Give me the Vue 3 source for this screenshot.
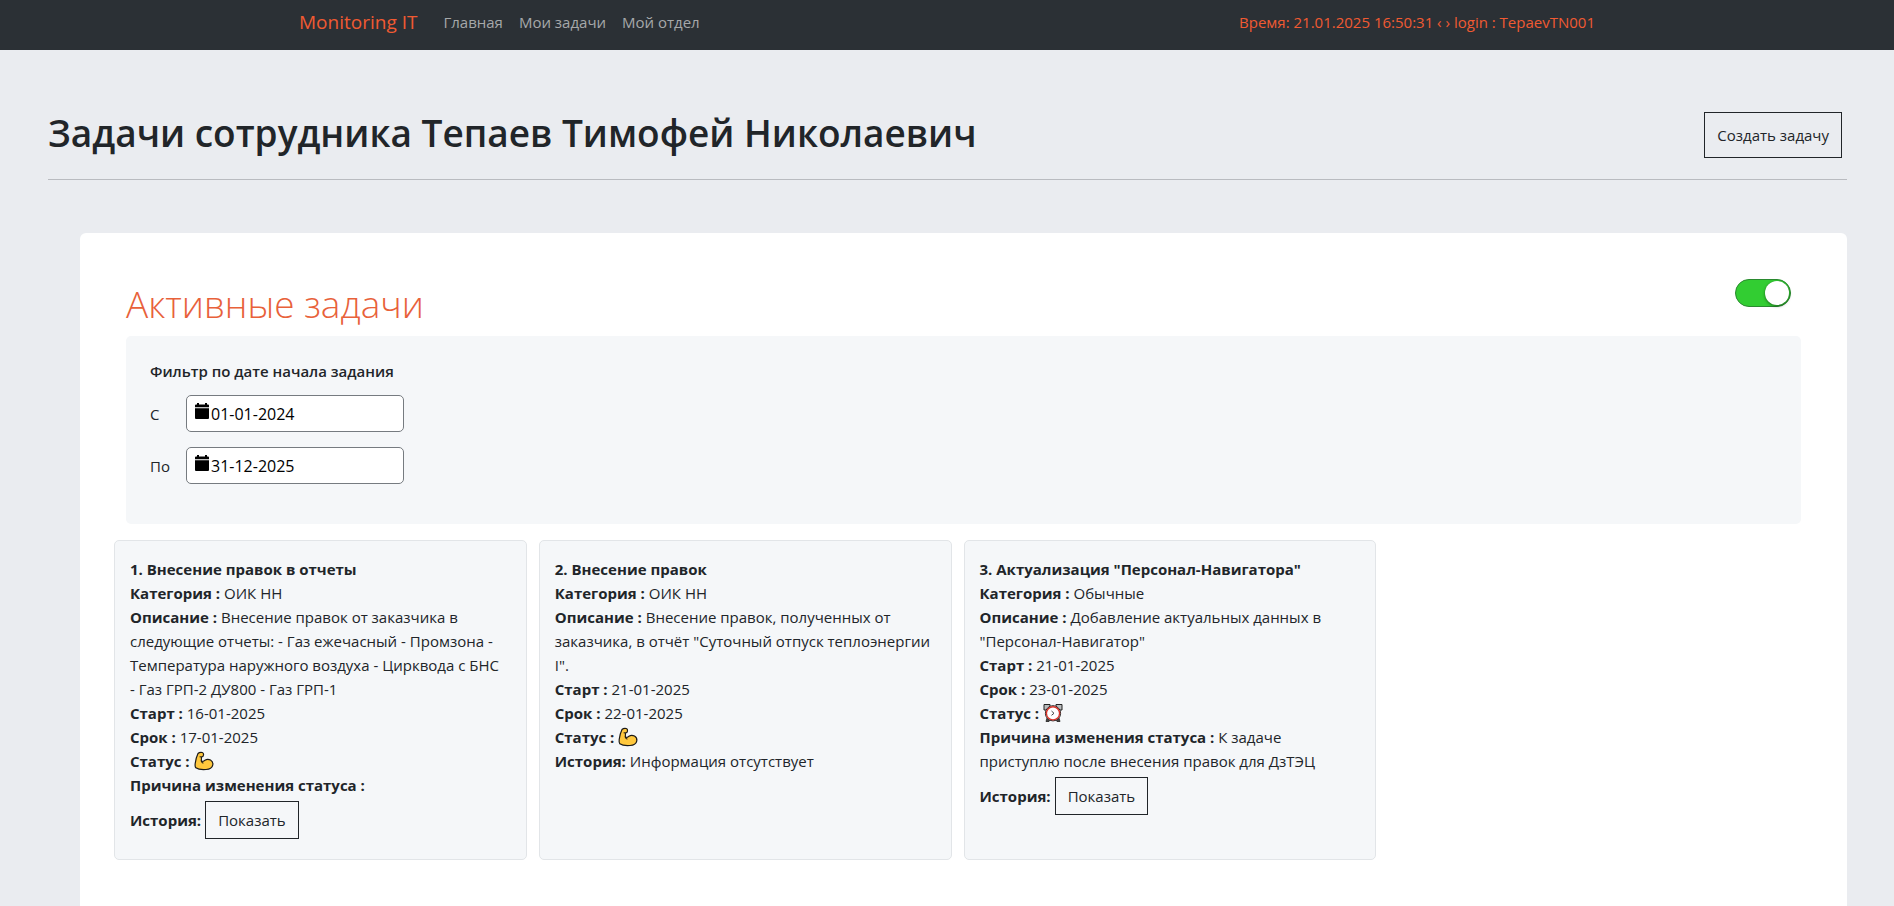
<script setup>
import { ref } from 'vue'

const activeOnly = ref(true)
const from = ref('01-01-2024')
const to = ref('31-12-2025')

const tasks = [
  {
    title: '1. Внесение правок в отчеты',
    category: 'ОИК НН',
    text: 'Внесение правок от заказчика в следующие отчеты: - Газ ежечасный - Промзона - Температура наружного воздуха - Цирквода с БНС - Газ ГРП-2 ДУ800 - Газ ГРП-1',
    start: '16-01-2025',
    due: '17-01-2025',
    status: 'arm',
    reason: '',
    history: true,
  },
  {
    title: '2. Внесение правок',
    category: 'ОИК НН',
    text: 'Внесение правок, полученных от заказчика, в отчёт "Суточный отпуск теплоэнергии I".',
    start: '21-01-2025',
    due: '22-01-2025',
    status: 'arm',
    reason: null,
    history: false,
  },
  {
    title: '3. Актуализация "Персонал-Навигатора"',
    category: 'Обычные',
    text: 'Добавление актуальных данных в "Персонал-Навигатор"',
    start: '21-01-2025',
    due: '23-01-2025',
    status: 'clock',
    reason: 'К задаче приступлю после внесения правок для ДзТЭЦ',
    history: true,
  },
]
</script>

<template>
  <div class="page">
    <header class="navbar">
      <div class="container">
        <a class="brand" href="#">Monitoring IT</a>
        <nav class="links">
          <a href="#">Главная</a>
          <a href="#">Мои задачи</a>
          <a href="#">Мой отдел</a>
        </nav>
        <span class="session">Время: 21.01.2025 16:50:31 ‹ › login : TepaevTN001</span>
      </div>
    </header>

    <main class="main">
      <div class="heading">
        <h1>Задачи сотрудника Тепаев Тимофей Николаевич</h1>
        <button class="btn" type="button">Создать задачу</button>
      </div>

      <section class="panel">
        <div class="panel-head">
          <h2>Активные задачи</h2>
          <input v-model="activeOnly" class="switch" type="checkbox" aria-label="Активные задачи" />
        </div>

        <form class="filter" @submit.prevent>
          <h3>Фильтр по дате начала задания</h3>
          <div class="field">
            <label for="from">С</label>
            <div class="date">
              <svg viewBox="0 0 14 16" aria-hidden="true">
                <path d="M2 0h2v1.500h6V0h2v1.500h1a1 1 0 0 1 1 1V4.300H0V2.500a1 1 0 0 1 1-1h1zM0 5.200h14V15a1 1 0 0 1-1 1H1a1 1 0 0 1-1-1z" />
              </svg>
              <input id="from" v-model="from" type="text" />
            </div>
          </div>
          <div class="field">
            <label for="to">По</label>
            <div class="date">
              <svg viewBox="0 0 14 16" aria-hidden="true">
                <path d="M2 0h2v1.500h6V0h2v1.500h1a1 1 0 0 1 1 1V4.300H0V2.500a1 1 0 0 1 1-1h1zM0 5.200h14V15a1 1 0 0 1-1 1H1a1 1 0 0 1-1-1z" />
              </svg>
              <input id="to" v-model="to" type="text" />
            </div>
          </div>
        </form>

        <div class="cards">
          <article v-for="task in tasks" :key="task.title" class="card">
            <div><b>{{ task.title }}</b></div>
            <div><b>Категория :</b> {{ task.category }}</div>
            <div><b>Описание :</b> {{ task.text }}</div>
            <div><b>Старт :</b> {{ task.start }}</div>
            <div><b>Срок :</b> {{ task.due }}</div>
            <div class="status">
              <b>Статус :</b>
              <svg v-if="task.status === 'arm'" viewBox="0 0 20 20" role="img" aria-label="В работе">
                <path d="M4 2.500Q5.500 1 8.300 1.500Q9.800 2 9.500 4Q9.300 6 7.500 6L7.300 10Q9.500 11 11 9.200Q13.500 7.500 16.500 9Q19.300 10.700 18.800 13.800Q18 18 12 18.500Q5 19 1.800 16.800Q.800 15.800 1.200 12.500Q2 6.500 4 2.500Z" fill="#ffc83d" stroke="#1c1a17" stroke-width="1.200" stroke-linejoin="round" />
                <path d="M6 5.800L7.500 6M7.300 10Q7.500 11.500 9 12" fill="none" stroke="#1c1a17" stroke-width="1.100" stroke-linecap="round" />
              </svg>
              <svg v-else viewBox="0 0 20 20" role="img" aria-label="Отложено">
                <path d="M4 15L3 18.500H6L7 17ZM16 15L17 18.500H14L13 17Z" fill="#444" stroke="#222" stroke-width=".8" />
                <path d="M1 7V1.500H7V3.500L3 7ZM19 7V1.500H13V3.500L17 7Z" fill="#b9bcbe" stroke="#222" stroke-width="1" stroke-linejoin="round" />
                <circle cx="10" cy="10.300" r="7.600" fill="#fff" stroke="#222" stroke-width="1" />
                <circle cx="10" cy="10.300" r="6.600" fill="#fff" stroke="#d9342b" stroke-width="1.400" />
                <path d="M8.500 8L11 10.300L8.500 12.300" fill="none" stroke="#444" stroke-width="1" />
              </svg>
            </div>
            <div v-if="task.reason !== null"><b>Причина изменения статуса :</b> {{ task.reason }}</div>
            <div v-if="task.history" class="history">
              <b>История:</b>
              <button class="btn" type="button">Показать</button>
            </div>
            <div v-else><b>История:</b> Информация отсутствует</div>
          </article>
        </div>
      </section>
    </main>
  </div>
</template>

<style>
body {
  margin: 0;
  background: #eaecf0;
}
</style>

<style scoped>
.page {
  display: flex;
  flex-direction: column;
  min-height: 100vh;
  color: #212529;
  font-family: "Open Sans", "Noto Sans", sans-serif;
  font-size: 15px;
  line-height: 24px;
}
h1, h2, h3 {
  margin: 0;
}
.navbar {
  background: #2b3035;
  color: #f05a32;
}
.container {
  display: flex;
  align-items: center;
  box-sizing: border-box;
  max-width: 1320px;
  height: 50px;
  margin: 0 auto;
  padding: 0 12px 6px;
}
.brand {
  margin-right: 26px;
  color: inherit;
  font-size: 19px;
  text-decoration: none;
}
.links {
  display: flex;
  gap: 16px;
}
.links a {
  color: #a6a8aa;
  text-decoration: none;
}
.session {
  margin-left: auto;
}
.main {
  display: flex;
  flex-direction: column;
  flex: 1;
  padding: 62px 47px 0 48px;
}
.heading {
  display: flex;
  justify-content: space-between;
  align-items: flex-start;
  padding: 0 5px 21px 0;
  border-bottom: 1px solid #b9bbc0;
}
.heading h1 {
  font-size: 37px;
  font-weight: 600;
  line-height: 42px;
}
.btn {
  padding: 6px 12px;
  border: 1px solid #212529;
  background: transparent;
  color: inherit;
  font: inherit;
}
.heading .btn {
  padding: 10px 12px;
}
.panel {
  flex: 1;
  margin: 53px 0 0 32px;
  padding: 46px 46px 46px 34px;
  border-radius: 6px 6px 0 0;
  background: #fff;
}
.panel-head {
  display: flex;
  justify-content: space-between;
  align-items: flex-start;
  margin-left: 12px;
  padding: 0 10px 7px 0;
}
.panel-head h2 {
  color: #e8613a;
  font-size: 37px;
  font-weight: 300;
  line-height: 50px;
}
.switch {
  appearance: none;
  width: 56px;
  height: 28px;
  margin: 0;
  padding: 1px;
  border: 1px solid #8a8f94;
  border-radius: 14px;
  background: #ccc;
}
.switch::before {
  display: block;
  width: 24px;
  height: 24px;
  border-radius: 50%;
  background: #fff;
  box-shadow: 0 1px 3px rgba(0, 0, 0, 0.5);
  content: "";
}
.switch:checked {
  border-color: #2a8a2f;
  background: #32cd32;
}
.switch:checked::before {
  margin-left: auto;
}
.filter {
  margin-left: 12px;
  padding: 23px 24px 40px;
  border-radius: 5px;
  background: #f5f7f9;
}
.filter h3 {
  margin-bottom: 12px;
  font-size: 15px;
  font-weight: 600;
}
.field {
  display: flex;
  align-items: center;
  margin-bottom: 15px;
}
.field:last-child {
  margin-bottom: 0;
}
.field label {
  width: 36px;
}
.date {
  display: flex;
  align-items: center;
  box-sizing: border-box;
  width: 218px;
  height: 37px;
  padding: 0 8px;
  border: 1px solid #767b80;
  border-radius: 5px;
  background: #fff;
}
.date svg {
  flex: none;
  width: 14px;
  height: 16px;
  margin: 0 2px 5px 0;
}
.date input {
  min-width: 0;
  flex: 1;
  padding: 0;
  border: 0;
  outline: 0;
  background: none;
  color: #000;
  font: inherit;
  font-size: 16px;
}
.cards {
  display: grid;
  grid-template-columns: repeat(4, 1fr);
  gap: 12px;
  margin-top: 16px;
}
.card {
  padding: 16px 19px 16px 15px;
  border: 1px solid #e2e5e8;
  border-radius: 5px;
  background: #f5f7f9;
}
.status,
.history {
  display: flex;
  align-items: center;
  gap: 4px;
}
.status svg {
  width: 20px;
  height: 20px;
}
.history .btn {
  margin: 4px 0;
}
</style>
